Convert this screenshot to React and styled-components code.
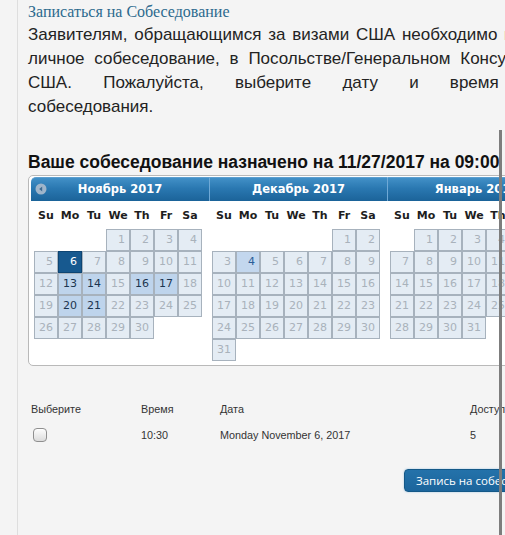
import styled, { createGlobalStyle, css } from "styled-components"

const GlobalStyle = createGlobalStyle`
  html, body {
    margin: 0;
    padding: 0;
    background: #f4f4f4;
    overflow: hidden;
  }
  body {
    font-family: "Liberation Sans", Arial, sans-serif;
    color: #222;
  }
`

const Page = styled.div`
  margin-left: 17px;
  border-left: 1px solid #dedede;
  padding: 2px 0 0 10px;
  min-height: 100vh;
  width: 620px;
  box-sizing: border-box;
`

const Title = styled.div`
  font-family: "Liberation Serif", "Times New Roman", serif;
  font-size: 16px;
  line-height: 20px;
  color: #2c6a8e;
`

const Intro = styled.div`
  width: 531px;
  margin-top: 1px;
  font-size: 17px;
  line-height: 24px;
  color: #232323;
`

const Line = styled.div`
  text-align: justify;
  text-align-last: ${(p) => (p.$last ? "left" : "justify")};
`

const Heading = styled.div`
  margin-top: 33px;
  font-size: 17.5px;
  font-weight: bold;
  line-height: 20px;
  color: #111;
  white-space: nowrap;
`

const Picker = styled.div`
  margin-top: 3px;
  display: flex;
  width: max-content;
  padding: 1px 2px 4px;
  background: #fff;
  border: 1px solid #b9b9b9;
  border-radius: 5px;
`

const Group = styled.div`
  width: 178px;
`

const MonthHeader = styled.div`
  position: relative;
  height: 24px;
  line-height: 23px;
  text-align: center;
  font-family: "DejaVu Sans", Verdana, sans-serif;
  font-size: 11.5px;
  font-weight: bold;
  color: #fff;
  background: linear-gradient(#4290c7, #2a78b1 45%, #1b6399);
  border-top: 1px solid #5c9fd0;
  box-sizing: border-box;
  ${(p) => p.$first && css`border-top-left-radius: 5px;`}
  ${(p) => p.$last && css`border-top-right-radius: 5px;`}
  ${(p) => !p.$first && css`border-left: 1px solid #6fa9d6;`}
`

const PrevIcon = styled.svg`
  position: absolute;
  left: 4px;
  top: 5px;
`

const DayNames = styled.div`
  display: grid;
  grid-template-columns: repeat(7, 24px);
  padding-left: 3px;
  height: 28px;
  align-items: center;
  font-family: "DejaVu Sans", Verdana, sans-serif;
  font-size: 11px;
  font-weight: bold;
  color: #1e1e1e;
  text-align: center;
`

const Days = styled.div`
  display: grid;
  grid-template-columns: repeat(7, 24px);
  grid-auto-rows: 22px;
  padding-left: 3px;
`

const dayStates = {
  disabled: css`
    background: #e4ecf4;
    color: #a9b2bb;
  `,
  available: css`
    background: #bed4ec;
    color: #1c3550;
  `,
  selected: css`
    background: #17598f;
    border-color: #0e4573;
    color: #fff;
  `,
  highlight: css`
    background: #c3d7ee;
    color: #2b5e98;
  `,
}

const Day = styled.div`
  box-sizing: border-box;
  border: 1px solid #a7b2bd;
  padding-right: 4px;
  text-align: right;
  line-height: 20px;
  font-family: "DejaVu Sans", Verdana, sans-serif;
  font-size: 11px;
  ${(p) => dayStates[p.$state]}
`

const Blank = styled.div``

const Table = styled.div`
  margin-top: 30px;
  padding-left: 3px;
  display: grid;
  grid-template-columns: 110px 79px 250px auto;
  grid-auto-rows: 26px;
  align-items: center;
  font-size: 10.8px;
  color: #333;
`

const Checkbox = styled.span`
  display: block;
  width: 14px;
  height: 14px;
  margin-left: 2px;
  box-sizing: border-box;
  border: 1px solid #8f8f8f;
  border-radius: 4px;
  background: linear-gradient(#fdfdfd, #dcdcdc);
  box-shadow: inset 0 1px 1px rgba(255, 255, 255, 0.8);
`

const ButtonRow = styled.div`
  margin-top: 21px;
  padding-left: 376px;
`

const Button = styled.button`
  height: 23px;
  padding: 0 11px;
  border: 1px solid #145887;
  border-radius: 4px;
  background: linear-gradient(#2472aa, #1b659c);
  box-shadow: 0 0 2px rgba(90, 160, 215, 0.6);
  color: #fff;
  font-family: "Open Sans", "DejaVu Sans", sans-serif;
  font-size: 11.5px;
  white-space: nowrap;
`

const Scrollbar = styled.div`
  position: fixed;
  top: 130px;
  bottom: 0;
  left: 499px;
  width: 3px;
  background: #7d7d7d;
`

const months = [
  { name: "Ноябрь 2017", year: 2017, month: 10, states: { 6: "selected", 13: "available", 14: "available", 16: "available", 17: "available", 20: "available", 21: "available" } },
  { name: "Декабрь 2017", year: 2017, month: 11, states: { 4: "highlight" } },
  { name: "Январь 2018", year: 2018, month: 0, states: {} },
]

const weekdays = ["Su", "Mo", "Tu", "We", "Th", "Fr", "Sa"]

function monthCells(year, month) {
  const first = new Date(year, month, 1).getDay()
  const count = new Date(year, month + 1, 0).getDate()
  const cells = []
  for (let i = 0; i < first; i++) cells.push(null)
  for (let d = 1; d <= count; d++) cells.push(d)
  return cells
}

const App = () => {
  return (
    <>
      <GlobalStyle />
      <Page>
        <Title>Записаться на Собеседование</Title>
        <Intro>
          <Line>Заявителям, обращающимся за визами США необходимо пройти</Line>
          <Line>личное собеседование, в Посольстве/Генеральном Консульстве</Line>
          <Line>США. Пожалуйста, выберите дату и время для</Line>
          <Line $last>собеседования.</Line>
        </Intro>
        <Heading>Ваше собеседование назначено на 11/27/2017 на 09:00</Heading>
        <Picker>
          {months.map((m, i) => (
            <Group key={m.name}>
              <MonthHeader $first={i === 0} $last={i === months.length - 1}>
                {i === 0 && (
                  <PrevIcon width="12" height="12" viewBox="0 0 12 12">
                    <circle cx="6" cy="6" r="5.5" fill="#9fb5ca" />
                    <path d="M7.2 3.4 L4.2 6 L7.2 8.6 Z" fill="#3d6b93" />
                  </PrevIcon>
                )}
                {m.name}
              </MonthHeader>
              <DayNames>
                {weekdays.map((w) => (
                  <span key={w}>{w}</span>
                ))}
              </DayNames>
              <Days>
                {monthCells(m.year, m.month).map((d, k) =>
                  d ? (
                    <Day key={k} $state={m.states[d] || "disabled"}>
                      {d}
                    </Day>
                  ) : (
                    <Blank key={k} />
                  )
                )}
              </Days>
            </Group>
          ))}
        </Picker>
        <Table>
          <span>Выберите</span>
          <span>Время</span>
          <span>Дата</span>
          <span>Доступно</span>
          <Checkbox />
          <span>10:30</span>
          <span>Monday November 6, 2017</span>
          <span>5</span>
        </Table>
        <ButtonRow>
          <Button>Запись на собеседование</Button>
        </ButtonRow>
      </Page>
      <Scrollbar />
    </>
  )
}

export default App
